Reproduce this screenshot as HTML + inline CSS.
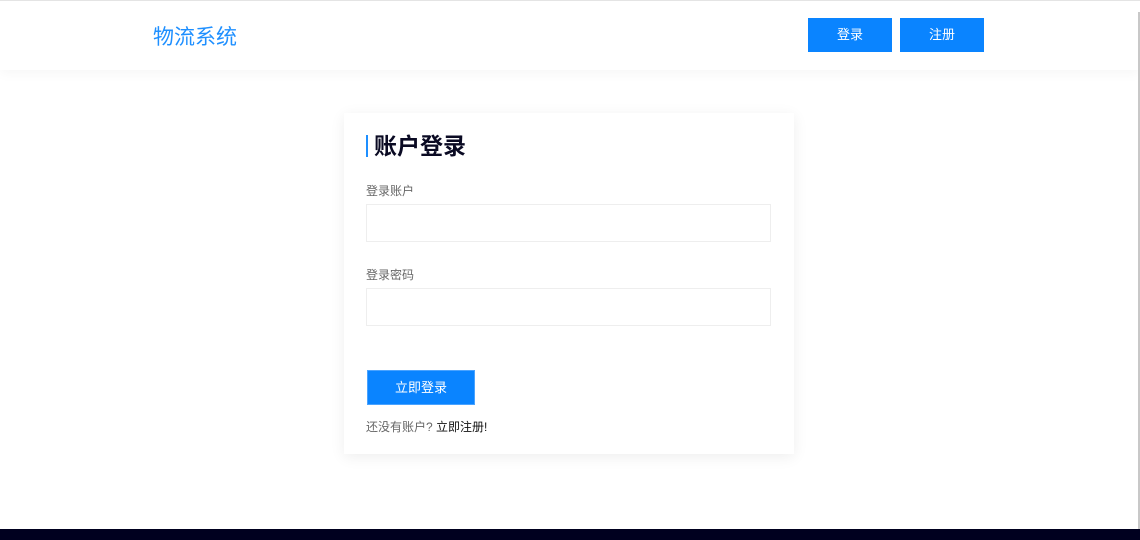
<!DOCTYPE html>
<html><head><meta charset="utf-8"><style>
*{margin:0;padding:0;box-sizing:border-box}
body{width:1140px;height:540px;overflow:hidden;background:#fff;font-family:"Liberation Sans","Noto Sans CJK SC",sans-serif;position:relative}
.hdr{position:absolute;left:0;top:0;width:1140px;height:70px;background:#fff;border-top:1px solid #e4e4e4;box-shadow:0 3px 12px rgba(0,0,0,.04)}
.logo{position:absolute;left:153px;top:20px;font-size:21px;color:#1e8fff;letter-spacing:0}
.btn{position:absolute;top:17px;width:84px;height:34px;background:#0a84ff;color:#fff;font-size:13px;text-align:center;line-height:34px}
.card{position:absolute;left:344px;top:113px;width:450px;height:341px;background:#fff;box-shadow:0 3px 14px rgba(0,0,0,.07)}
.title{position:absolute;left:22px;top:22px;font-size:23px;font-weight:bold;color:#0a0a23;padding-left:6px;border-left:2px solid #1e8fff;line-height:22px}
.lbl{position:absolute;left:22px;font-size:12px;color:#666}
.inp{position:absolute;left:22px;width:405px;height:38px;border:1px solid #eee;background:#fff}
.sub{position:absolute;left:23px;top:257px;width:108px;height:35px;background:#0a84ff;color:#fff;font-size:13px;text-align:center;line-height:33px;border:1px solid #4aa3ff}
.reg{position:absolute;left:22px;top:305px;font-size:12px;color:#666}
.reg b{font-weight:normal;color:#111}
.ft{position:absolute;left:0;top:529px;width:1140px;height:11px;background:#00001f}
.sb{position:absolute;right:0;top:12px;width:2px;height:517px;background:#c8c8c8}
</style></head><body>
<div class="hdr">
<div class="logo">物流系统</div>
<div class="btn" style="left:808px">登录</div>
<div class="btn" style="left:900px">注册</div>
</div>
<div class="sb"></div>
<div class="card">
<div class="title">账户登录</div>
<div class="lbl" style="top:69px">登录账户</div>
<div class="inp" style="top:91px"></div>
<div class="lbl" style="top:153px">登录密码</div>
<div class="inp" style="top:175px"></div>
<div class="sub">立即登录</div>
<div class="reg">还没有账户? <b>立即注册!</b></div>
</div>
<div class="ft"></div>
</body></html>
